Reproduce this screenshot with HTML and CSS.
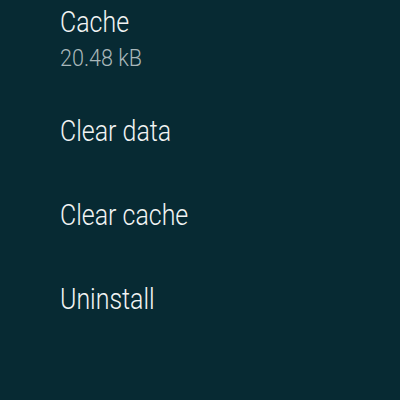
FILE: index.html
```html
<!DOCTYPE html>
<html>
<head>
<meta charset="utf-8">
<link rel="stylesheet" href="styles.css">
</head>
<body>
<div class="list">
  <div class="item item-first">
    <div class="title">Cache</div>
    <div class="sub">20.48 kB</div>
  </div>
  <div class="item"><div class="title">Clear data</div></div>
  <div class="item"><div class="title">Clear cache</div></div>
  <div class="item"><div class="title">Uninstall</div></div>
</div>
</body>
</html>
```

FILE: styles.css
```css
html, body {
  margin: 0;
  padding: 0;
  width: 400px;
  height: 400px;
  background: #072a33;
  overflow: hidden;
}
body {
  font-family: Roboto, "Noto Sans", sans-serif;
  font-weight: 300;
  color: #f2f4f4;
}
.list {
  display: flex;
  flex-direction: column;
  padding-left: 60px;
}
.item {
  display: flex;
  flex-direction: column;
  box-sizing: border-box;
}
.title {
  font-size: 29px;
  line-height: 32px;
  white-space: nowrap;
  transform: scaleX(0.86);
  transform-origin: left center;
}
.sub {
  margin-top: 4px;
  font-size: 24.5px;
  line-height: 32px;
  white-space: nowrap;
  color: #a9b7ba;
  transform: scaleX(0.88);
  transform-origin: left center;
}
.item-first {
  padding-top: 6px;
  height: 115px;
}
.item + .item {
  height: 84px;
}
```
